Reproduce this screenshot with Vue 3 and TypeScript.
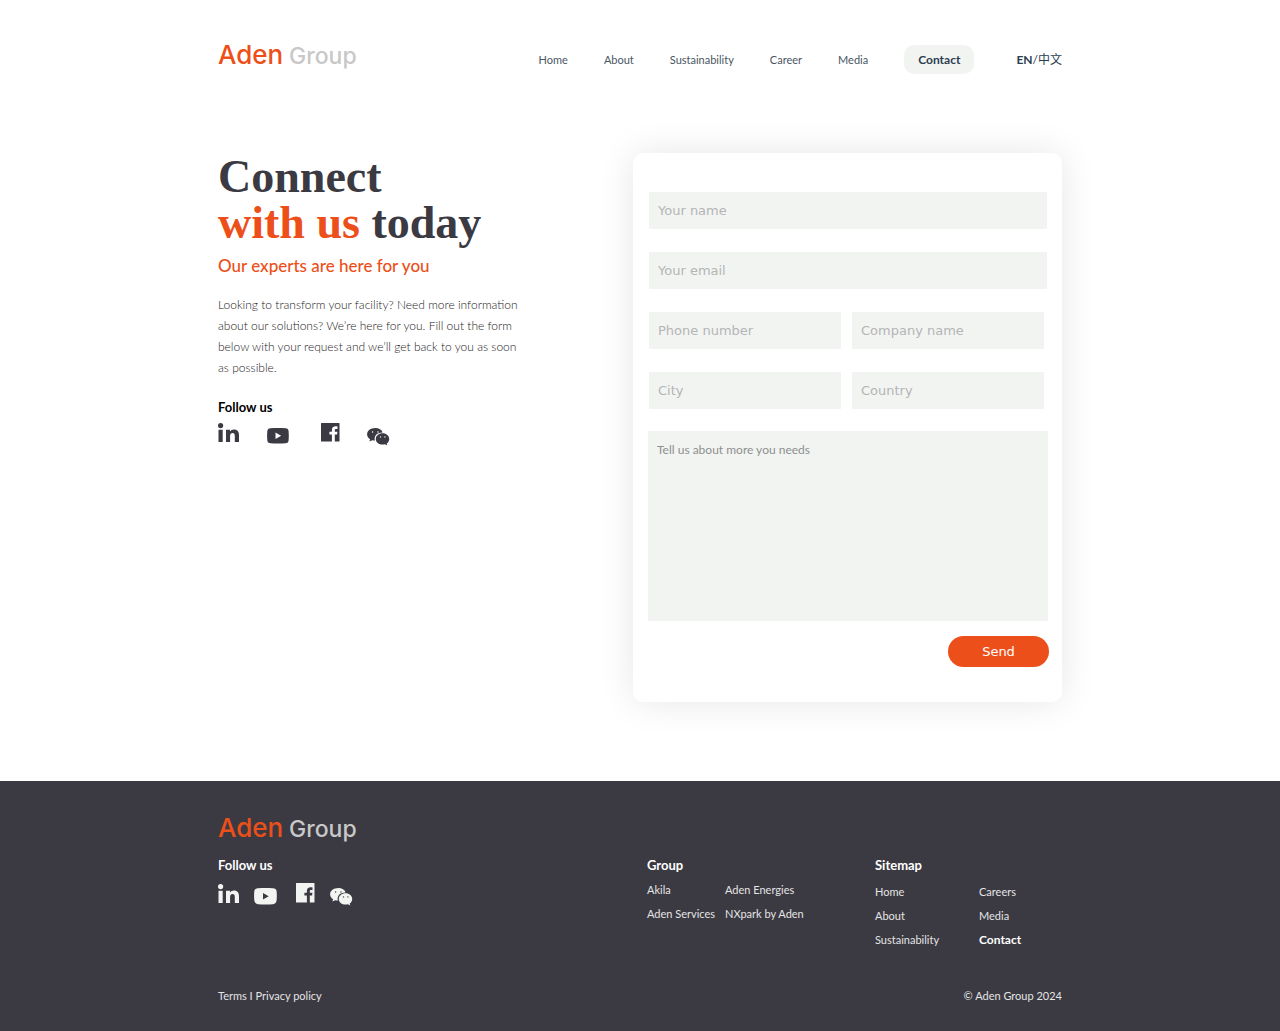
<script setup lang="ts">
import { reactive } from 'vue'

interface NavLink {
  label: string
  active?: boolean
}

const nav: NavLink[] = [
  { label: 'Home' },
  { label: 'About' },
  { label: 'Sustainability' },
  { label: 'Career' },
  { label: 'Media' },
  { label: 'Contact', active: true },
]

const groupLinks: NavLink[] = [
  { label: 'Akila' },
  { label: 'Aden Energies' },
  { label: 'Aden Services' },
  { label: 'NXpark by Aden' },
]

const sitemapLinks: NavLink[] = [
  { label: 'Home' },
  { label: 'Careers' },
  { label: 'About' },
  { label: 'Media' },
  { label: 'Sustainability' },
  { label: 'Contact', active: true },
]

const socials = ['LinkedIn', 'YouTube', 'Facebook', 'WeChat']

const fields = [
  { id: 'name', label: 'Your name', type: 'text', wide: true },
  { id: 'email', label: 'Your email', type: 'email', wide: true },
  { id: 'phone', label: 'Phone number', type: 'tel', wide: false },
  { id: 'company', label: 'Company name', type: 'text', wide: false },
  { id: 'city', label: 'City', type: 'text', wide: false },
  { id: 'country', label: 'Country', type: 'text', wide: false },
]

const form = reactive<Record<string, string>>({
  name: '',
  email: '',
  phone: '',
  company: '',
  city: '',
  country: '',
  message: '',
})
</script>

<template>
  <div class="page">
    <header class="container header">
      <a href="#" class="logo" aria-label="Aden Group">
        <svg width="144" height="37" viewBox="0 0 144 37">
          <text x="0" y="25" class="logo-aden">Aden</text>
          <text x="71" y="25" class="logo-group">Group</text>
        </svg>
      </a>
      <nav class="nav">
        <a v-for="item in nav" :key="item.label" href="#" :class="{ active: item.active }">{{ item.label }}</a>
        <span class="lang"><a href="#"><b>EN</b></a>/<a href="#">中文</a></span>
      </nav>
    </header>

    <main class="container main">
      <section class="intro">
        <h1>Connect<br /><em>with us</em> today</h1>
        <h2>Our experts are here for you</h2>
        <p>
          Looking to transform your facility? Need more information<br />
          about our solutions? We’re here for you. Fill out the form<br />
          below with your request and we’ll get back to you as soon<br />
          as possible.
        </p>
        <h3>Follow us</h3>
        <div class="socials">
          <a v-for="name in socials" :key="name" href="#" :aria-label="name">
            <svg width="24" height="24" viewBox="0 0 24 24" fill="currentColor">
              <template v-if="name === 'LinkedIn'">
                <circle cx="2.6" cy="3.6" r="2.6" />
                <path d="M.5 7.800h4.200V20H.5zM8 7.800h4v1.700c.8-1.300 2.100-2 4-2 3.500 0 5 2.200 5 5.800V20h-4.200v-6.100c0-1.900-.6-3-2.200-3-1.700 0-2.500 1.200-2.500 3V20H8z" />
              </template>
              <path v-else-if="name === 'YouTube'" fill-rule="evenodd" d="M3.500 6.300c5-.5 10-.5 15 0 2 .2 3 1 3.100 3 .3 3 .3 6 0 9-.1 2-1.100 2.800-3.100 3-5 .4-10 .4-15 0-2-.2-3-1-3.200-3-.3-3-.3-6 0-9 .2-2 1.200-2.800 3.200-3zM8.500 10.500v6.600l5.700-3.300z" />
              <path v-else-if="name === 'Facebook'" fill-rule="evenodd" d="M.5 1h17.500q.5 0 .5.500V19q0 .5-.5.500H13.800v-7h2.300l.3-2.700h-2.600V8.300c0-.9.300-1.400 1.400-1.400h1.300V4.400c-.6-.1-1.200-.1-1.900-.1-2.300 0-3.700 1.300-3.700 3.600v1.900H8.400v2.700h2.500v7H.5q-.5 0-.5-.5V1.500Q0 1 .5 1z" />
              <template v-else>
                <path fill-rule="evenodd" d="M8.300 6C3.700 6 .1 8.800.1 12.300c0 2 1.100 3.800 3 5L2.400 19.600l2.900-1.400c.9.3 1.700.4 2.600.4-1.300-4.800 2.500-8.400 7.700-8.200C14.800 7.800 11.900 6 8.300 6zM5.600 9.300a.7.700 0 1 1 0 1.400.7.700 0 0 1 0-1.400zM11 9.300a.7.700 0 1 1 0 1.400.7.700 0 0 1 0-1.400z" />
                <path fill-rule="evenodd" d="M15.600 11.300c-3.900 0-6.800 2.500-6.800 5.600 0 3.200 2.900 5.700 6.800 5.700.8 0 1.600-.1 2.300-.3l2.400 1.200-.6-2c1.700-1.100 2.500-2.700 2.500-4.600 0-3.100-2.800-5.600-6.600-5.600zM13.500 14.200a.7.700 0 1 1 0 1.400.7.700 0 0 1 0-1.400zM17.900 14.200a.7.700 0 1 1 0 1.400.7.700 0 0 1 0-1.400z" />
              </template>
            </svg>
          </a>
        </div>
      </section>

      <form class="card" @submit.prevent>
        <div class="fields">
          <div v-for="f in fields" :key="f.id" class="field" :class="{ wide: f.wide }">
            <input :id="f.id" v-model="form[f.id]" :type="f.type" :placeholder="f.label" :aria-label="f.label" />
          </div>
        </div>
        <textarea id="message" v-model="form.message" placeholder="Tell us about more you needs" aria-label="Tell us about more you needs"></textarea>
        <button type="submit">Send</button>
      </form>
    </main>

    <footer class="footer">
      <div class="container">
        <a href="#" class="logo" aria-label="Aden Group">
          <svg width="144" height="37" viewBox="0 0 144 37">
            <text x="0" y="25" class="logo-aden">Aden</text>
            <text x="71" y="25" class="logo-group">Group</text>
          </svg>
        </a>
        <div class="columns">
          <section class="brand">
            <h3>Follow us</h3>
            <div class="socials">
              <a v-for="name in socials" :key="name" href="#" :aria-label="name">
                <svg width="24" height="24" viewBox="0 0 24 24" fill="currentColor">
                  <template v-if="name === 'LinkedIn'">
                    <circle cx="2.6" cy="3.6" r="2.6" />
                    <path d="M.5 7.800h4.200V20H.5zM8 7.800h4v1.700c.8-1.300 2.100-2 4-2 3.500 0 5 2.200 5 5.800V20h-4.200v-6.100c0-1.900-.6-3-2.200-3-1.700 0-2.500 1.200-2.500 3V20H8z" />
                  </template>
                  <path v-else-if="name === 'YouTube'" fill-rule="evenodd" d="M4 5.300c5-.5 10-.5 15 0 2 .2 3.500 1 3.600 3 .3 3 .3 6 0 9-.1 2-1.600 3.800-3.600 4-5 .4-10 .4-15 0-2-.2-3.500-2-3.700-4-.3-3-.3-6 0-9 .2-2 1.700-2.800 3.700-3zM9 10v6.600l5.700-3.300z" />
                  <path v-else-if="name === 'Facebook'" fill-rule="evenodd" d="M.5 0h17.500q.5 0 .5.500V19q0 .5-.5.500H13.800v-7h2.300l.3-2.700h-2.600V8.300c0-.9.300-1.400 1.400-1.400h1.300V4.400c-.6-.1-1.200-.1-1.900-.1-2.300 0-3.700 1.300-3.700 3.600v1.900H8.400v2.700h2.500v7H.5q-.5 0-.5-.5V.5Q0 0 .5 0z" />
                  <template v-else>
                    <path fill-rule="evenodd" d="M8.300 5C3.700 5 .1 7.800.1 11.300c0 2 1.100 3.800 3 5L2.400 18.600l2.900-1.400c.9.3 1.700.4 2.600.4-1.300-4.800 2.500-8.400 7.700-8.200C14.800 6.800 11.900 5 8.300 5zM5.600 8.300a.7.700 0 1 1 0 1.400.7.700 0 0 1 0-1.400zM11 8.300a.7.700 0 1 1 0 1.400.7.700 0 0 1 0-1.400z" />
                    <path fill-rule="evenodd" d="M15.600 10.300c-3.900 0-6.800 2.500-6.800 5.600 0 3.200 2.900 5.700 6.800 5.700.8 0 1.600-.1 2.300-.3l2.400 1.200-.6-2c1.700-1.100 2.500-2.700 2.500-4.600 0-3.100-2.800-5.600-6.600-5.600zM13.500 13.200a.7.700 0 1 1 0 1.400.7.700 0 0 1 0-1.400zM17.900 13.200a.7.700 0 1 1 0 1.400.7.700 0 0 1 0-1.400z" />
                  </template>
                </svg>
              </a>
            </div>
          </section>
          <section class="group">
            <h3>Group</h3>
            <div class="links">
              <a v-for="l in groupLinks" :key="l.label" href="#">{{ l.label }}</a>
            </div>
          </section>
          <section class="sitemap">
            <h3>Sitemap</h3>
            <div class="links">
              <a v-for="l in sitemapLinks" :key="l.label" href="#" :class="{ active: l.active }">{{ l.label }}</a>
            </div>
          </section>
        </div>
        <div class="legal">
          <span><a href="#">Terms</a> I <a href="#">Privacy policy</a></span>
          <span>© Aden Group 2024</span>
        </div>
      </div>
    </footer>
  </div>
</template>

<style>
body {
  margin: 0;
  background: #fff;
}
</style>

<style scoped>
.page {
  font-family: Lato, 'Noto Sans CJK SC', sans-serif;
  font-weight: 400;
  font-size: 11px;
  color: #3b3941;
}

.container {
  box-sizing: border-box;
  max-width: 844px;
  margin: 0 auto;
}

a {
  color: inherit;
  text-decoration: none;
}

h1,
h2,
h3,
p {
  margin: 0;
}

.header {
  display: flex;
  justify-content: space-between;
  padding-top: 39px;
}

.logo,
.logo svg {
  display: block;
}

.logo-aden {
  font: 500 26px Inter, sans-serif;
  fill: #ec4f19;
}

.logo-group {
  font: 500 23px Inter, sans-serif;
  fill: #c8c8c8;
}

.nav {
  display: flex;
  align-items: center;
  gap: 36px;
  height: 33px;
  padding-top: 4px;
  line-height: 18px;
  color: #4a5663;
}

.nav .active {
  padding: 6px 14px 5px;
  border-radius: 10px;
  background: #f2f4f2;
  font-size: 12px;
  font-weight: 700;
  color: #2c3e50;
}

.lang {
  margin-left: 6px;
  font-size: 12px;
  color: #2c3e50;
}

.main {
  display: flex;
  justify-content: space-between;
  align-items: flex-start;
  padding: 77px 0 79px;
}

h1 {
  padding-top: 1px;
  font: 700 46px/46px 'Liberation Serif', serif;
}

h1 em {
  font-style: normal;
  color: #ec4f19;
}

h2 {
  padding-top: 8px;
  font: 500 17px/24px Lato, sans-serif;
  color: #ec4f19;
}

.intro p {
  padding-top: 16px;
  font-size: 12px;
  font-weight: 300;
  line-height: 21px;
  white-space: nowrap;
  color: #1c1a22;
}

h3 {
  font: 700 13px/18px Lato, sans-serif;
}

.intro h3 {
  padding-top: 20px;
  color: #000;
}

.socials {
  display: grid;
  grid-template-columns: 49px 54px 46px 24px;
  padding-top: 6px;
}

.socials svg {
  display: block;
}

.card {
  box-sizing: border-box;
  width: 429px;
  display: flex;
  flex-direction: column;
  padding: 39px 13px 35px 15px;
  border-radius: 10px;
  background: #fff;
  box-shadow: 0 0 36px rgba(0, 0, 0, 0.1);
}

.fields {
  display: flex;
  flex-wrap: wrap;
  gap: 23px 11px;
  margin: 0 2px 22px 1px;
}

.field {
  flex: 0 0 192px;
}

.field.wide {
  flex-basis: 100%;
}

input,
textarea {
  box-sizing: border-box;
  display: block;
  width: 100%;
  margin: 0;
  border: 0;
  border-radius: 0;
  outline: 0;
  background: #f2f4f2;
  color: #3b3941;
}

input {
  height: 37px;
  padding: 0 9px;
  font: 400 13px 'DejaVu Sans', sans-serif;
}

input::placeholder {
  color: #b4b5b5;
}

textarea {
  width: calc(100% - 1px);
  height: 190px;
  padding: 9px;
  resize: none;
  font: 400 12px/20px Lato, sans-serif;
}

textarea::placeholder {
  color: #8e8f8f;
}

button {
  align-self: flex-end;
  width: 101px;
  height: 31px;
  margin-top: 15px;
  padding: 0;
  border: 0;
  border-radius: 16px;
  background: #ec4f19;
  color: #fff;
  font: 400 13px 'DejaVu Sans', sans-serif;
}

.footer {
  padding: 31px 0 26px;
  background: #3b3941;
  color: #e4e5e5;
}

.footer h3 {
  color: #fff;
}

.columns {
  display: flex;
  padding-top: 7px;
}

.brand {
  flex: 1;
}

.footer .socials {
  grid-template-columns: 36px 42px 34px 24px;
  padding-top: 9px;
  color: #f2f4f2;
}

.links {
  display: grid;
  line-height: 24px;
}

.group .links {
  grid-template-columns: 78px 150px;
  padding-top: 4px;
}

.sitemap .links {
  grid-template-columns: 104px 83px;
  padding-top: 6px;
}

.links .active {
  font-size: 12px;
  font-weight: 700;
  color: #fff;
}

.legal {
  display: flex;
  justify-content: space-between;
  padding-top: 35px;
  line-height: 18px;
}
</style>
